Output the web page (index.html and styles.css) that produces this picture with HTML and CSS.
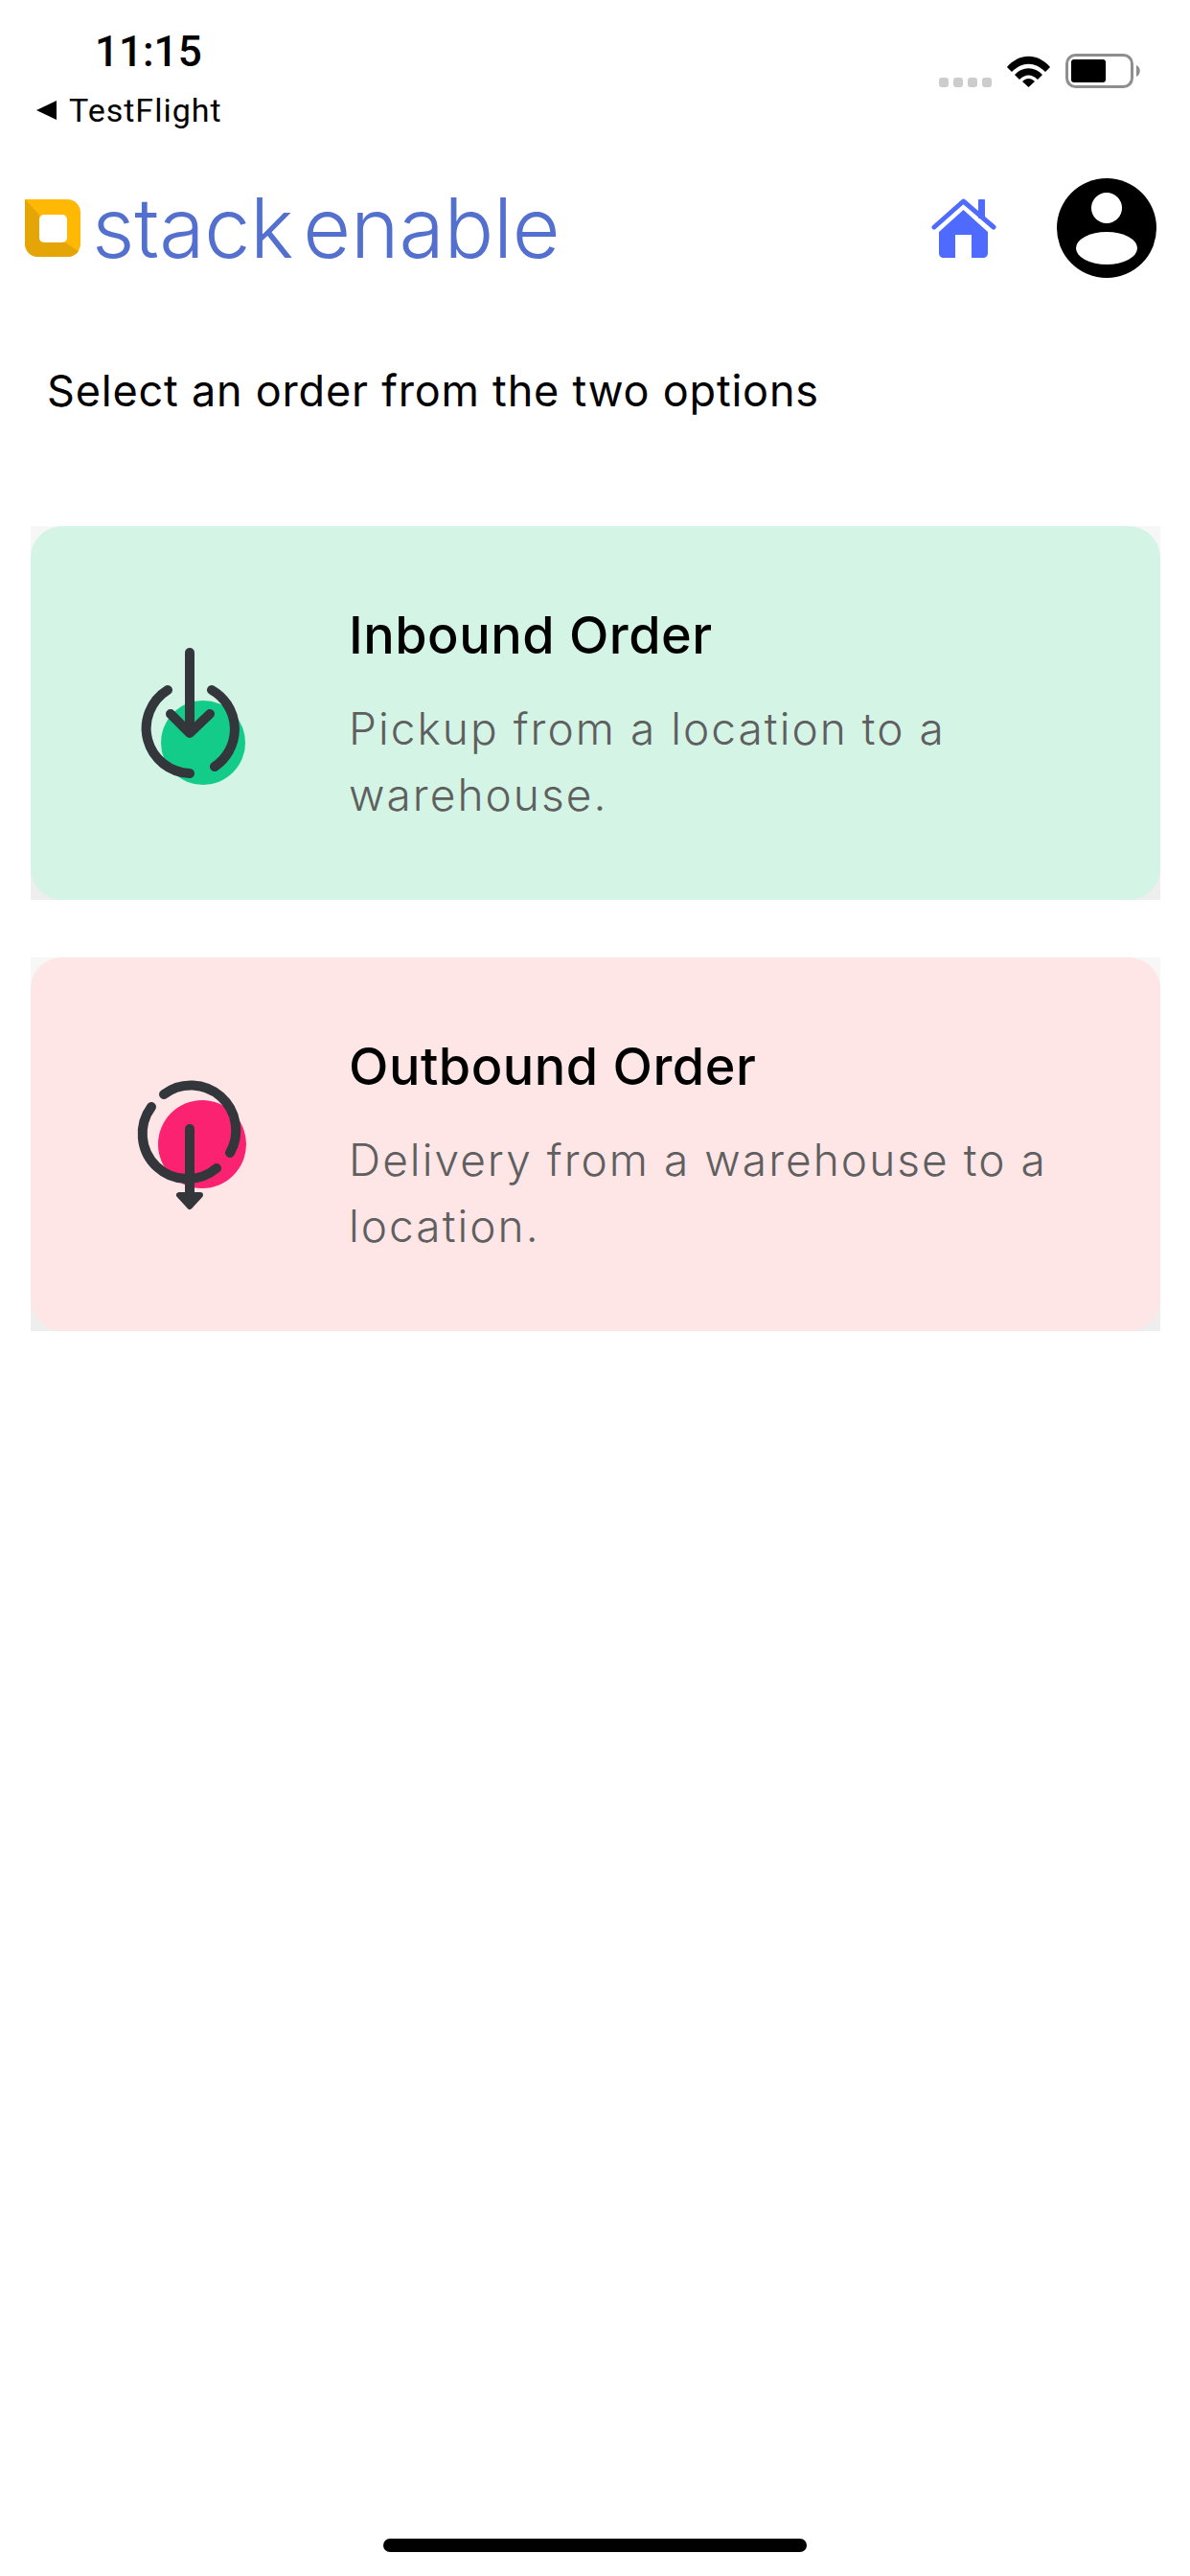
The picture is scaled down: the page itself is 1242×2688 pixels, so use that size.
FILE: index.html
```html
<!DOCTYPE html>
<html lang="en">
<head>
  <meta charset="UTF-8">
  <title>Select an order</title>
  <link rel="stylesheet" href="styles.css">
</head>
<body>
  <div class="screen">
    <div class="status-bar">
      <div class="status-left">
        <div class="time">11:15</div>
        <div class="back-app"><span class="back-arrow"></span>TestFlight</div>
      </div>
      <div class="status-right">
        <div class="signal"><span></span><span></span><span></span><span></span></div>
        <svg class="wifi" viewBox="0 0 47 35">
          <path d="M1 14 C14 -1 33 -1 46 14 L41 19 C30 8 17 8 6 19 Z" fill="#000"/>
          <path d="M9 22 C17 13 30 13 38 22 L33 27 C27 21 20 21 14 27 Z" fill="#000"/>
          <path d="M17 29 C21 25 26 25 30 29 L23.5 35 Z" fill="#000"/>
        </svg>
        <svg class="battery" viewBox="0 0 79 36">
          <rect x="1.500" y="1.500" width="68" height="33" rx="9" fill="#fff" stroke="#8e8e8e" stroke-width="3"/>
          <rect x="6" y="6" width="36" height="24" rx="3" fill="#000"/>
          <path d="M74 12 C79 14 79 22 74 24 Z" fill="#8e8e8e"/>
        </svg>
      </div>
    </div>

    <div class="top-bar">
      <div class="logo">
        <svg class="logo-mark" viewBox="0 0 58 60">
          <path d="M0 0 H44 C52 0 58 6 58 14 V46 C58 54 52 60 44 60 H14 C6 60 0 54 0 46 Z" fill="#ffb905"/>
          <path d="M0 0 L15 16 V40 C15 43 17 45 20 45 H42 L56 54 C53 58 49 60 44 60 H14 C6 60 0 54 0 46 Z" fill="#e5a507"/>
          <rect x="15" y="16" width="29" height="29" rx="5" fill="#fff"/>
        </svg>
        <span class="logo-text">stack enable</span>
      </div>
      <div class="top-icons">
        <svg class="home-icon" viewBox="0 0 68 62">
          <path d="M3 30 L33.500 3 L65 30" fill="none" stroke="#4f6bff" stroke-width="5" stroke-linecap="round" stroke-linejoin="round"/>
          <rect x="49" y="1" width="7" height="20" rx="1" fill="#4f6bff"/>
          <path d="M33.500 12 L59 35 V57 C59 60 57 62 54 62 H42 V38 H25 V62 H13 C10 62 8 60 8 57 V35 Z" fill="#4f6bff"/>
        </svg>
        <svg class="profile-icon" viewBox="0 0 104 104">
          <circle cx="52" cy="52" r="52" fill="#000"/>
          <circle cx="52" cy="31" r="16" fill="#fff"/>
          <ellipse cx="52" cy="73" rx="32" ry="17" fill="#fff"/>
        </svg>
      </div>
    </div>

    <p class="prompt">Select an order from the two options</p>

    <div class="cards">
      <div class="card-wrap">
        <div class="card card-inbound">
          <svg class="card-icon" viewBox="0 4 200 200">
            <circle cx="112" cy="135" r="44" fill="#14cc8a"/>
            <g fill="none" stroke="#33363b" stroke-width="10" stroke-linecap="round" stroke-linejoin="round">
              <path d="M98 41 V124"/>
              <path d="M78 105 L98 125 L119 105"/>
              <path d="M75 80 A47 47 0 0 0 98 167"/>
              <path d="M121 80 A47 47 0 0 1 124 160"/>
            </g>
          </svg>
          <div class="card-text">
            <div class="card-title">Inbound Order</div>
            <div class="card-desc">Pickup from a location to a warehouse.</div>
          </div>
        </div>
      </div>
      <div class="card-wrap">
        <div class="card card-outbound">
          <svg class="card-icon" viewBox="0 4 200 200">
            <circle cx="111" cy="104" r="46" fill="#fb2272"/>
            <g fill="none" stroke="#33363b" stroke-width="10" stroke-linecap="round" stroke-linejoin="round">
              <path d="M71 52 A47 47 0 0 1 140 113"/>
              <path d="M58 65 A47 47 0 0 0 126 129"/>
              <path d="M98 88 V158"/>
            </g>
            <path d="M87 157 H109 L98 169 Z" fill="#33363b" stroke="#33363b" stroke-width="6" stroke-linejoin="round"/>
          </svg>
          <div class="card-text">
            <div class="card-title">Outbound Order</div>
            <div class="card-desc">Delivery from a warehouse to a location.</div>
          </div>
        </div>
      </div>
    </div>

    <div class="home-indicator"></div>
  </div>
</body>
</html>
```

FILE: styles.css
```css
body {
  margin: 0;
  padding: 0;
  background: #fff;
  font-family: Inter, "Liberation Sans", sans-serif;
  color: #000;
}
.screen {
  width: 1242px;
  height: 2688px;
  display: flex;
  flex-direction: column;
  overflow: hidden;
}
.status-bar {
  height: 140px;
  display: flex;
  justify-content: space-between;
  box-sizing: border-box;
  padding: 26px 51px 0 38px;
}
.status-left {
  display: flex;
  flex-direction: column;
}
.time {
  font-family: Roboto, sans-serif;
  font-size: 44px;
  font-weight: 500;
  line-height: 56px;
  margin-left: 61px;
}
.back-app {
  display: flex;
  align-items: center;
  font-family: Roboto, sans-serif;
  font-size: 34px;
  line-height: 38px;
  letter-spacing: 1px;
  margin-top: 14px;
}
.back-arrow {
  width: 0;
  height: 0;
  border-style: solid;
  border-width: 10px 21px 10px 0;
  border-color: transparent #000 transparent transparent;
  margin-right: 13px;
}
.status-right {
  display: flex;
  align-items: flex-start;
  padding-top: 30px;
}
.signal {
  display: flex;
  gap: 5px;
  margin-top: 25px;
  margin-right: 15px;
}
.signal span {
  width: 10px;
  height: 10px;
  background: #ccc;
  border-radius: 3px;
}
.wifi {
  width: 47px;
  height: 35px;
  margin-right: 15px;
}
.battery {
  width: 79px;
  height: 36px;
}
.top-bar {
  height: 104px;
  margin-top: 46px;
  display: flex;
  justify-content: space-between;
  align-items: center;
  padding: 0 35px 0 26px;
}
.logo {
  display: flex;
  align-items: center;
  gap: 12px;
}
.logo-mark {
  width: 58px;
  height: 60px;
}
.logo-text {
  font-size: 86px;
  font-weight: 350;
  letter-spacing: -0.200px;
  word-spacing: -14px;
  color: #5470cf;
  line-height: 84px;
}
.top-icons {
  display: flex;
  align-items: center;
  gap: 63px;
}
.home-icon {
  width: 68px;
  height: 62px;
}
.profile-icon {
  width: 104px;
  height: 104px;
}
.prompt {
  margin: 93px 0 0 49px;
  font-size: 45px;
  line-height: 50px;
  letter-spacing: 0.800px;
}
.cards {
  display: flex;
  flex-direction: column;
  gap: 60px;
  margin: 116px 31px 0 32px;
}
.card-wrap {
  background: linear-gradient(#f7f7f7, #eeeeee);
}
.card {
  height: 390px;
  display: flex;
  align-items: center;
  gap: 64px;
  padding-left: 68px;
  border-radius: 33px;
}
.card-inbound {
  background: #d4f4e5;
}
.card-outbound {
  background: #fee5e6;
}
.card-icon {
  width: 200px;
  height: 200px;
  flex-shrink: 0;
}
.card-text {
  width: 760px;
  padding-top: 10px;
}
.card-title {
  font-size: 54px;
  font-weight: 450;
  letter-spacing: 0.500px;
  line-height: 56px;
}
.card-desc {
  font-size: 46px;
  font-weight: 350;
  line-height: 69px;
  letter-spacing: 2.050px;
  color: #5f5f5f;
  margin-top: 35px;
}
.home-indicator {
  width: 442px;
  height: 14px;
  border-radius: 7px;
  background: #000;
  margin: auto auto 25px;
}
```
